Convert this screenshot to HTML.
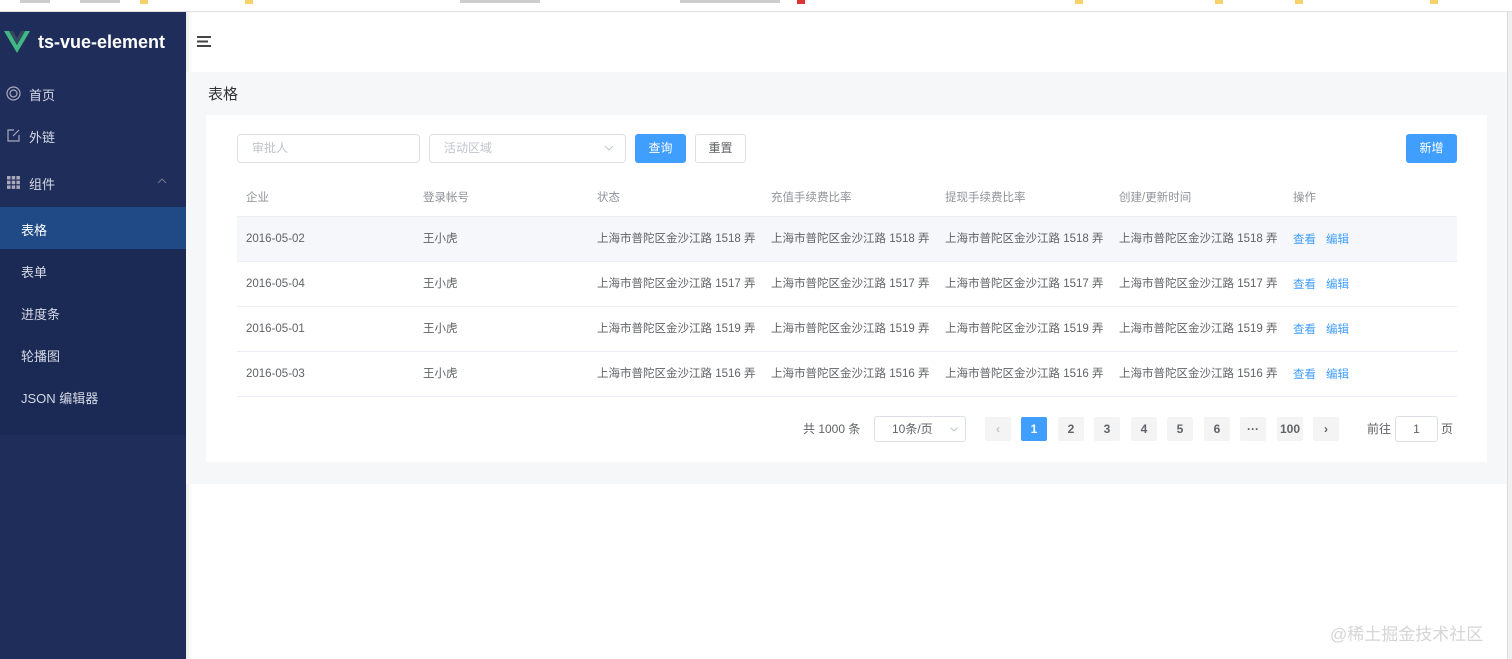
<!DOCTYPE html>
<html><head><meta charset="utf-8"><style>
*{margin:0;padding:0;box-sizing:border-box}
body{width:1512px;height:659px;overflow:hidden;background:#fff;font-family:"Liberation Sans","Noto Sans CJK SC",sans-serif;position:relative;color:#606266}
.top{position:absolute;left:0;top:0;width:1512px;height:12px;background:#fff;border-bottom:1px solid #e0e0e0}
.top i{position:absolute;top:0;width:8px;height:4px;background:#f5d36a}
.top b{position:absolute;top:0;height:3px;background:#999;opacity:.5}
.side{position:absolute;left:0;top:12px;width:186px;height:647px;background:#1f2d5a}
.sub{position:absolute;left:0;top:207px;width:186px;height:228px;background:#1b2a55}
.logo{position:absolute;left:38px;top:32px;color:#fff;font-weight:bold;font-size:18px}
.mi{position:absolute;left:29px;color:#d5d9e4;font-size:13px}
.si{position:absolute;left:21px;color:#d5d9e4;font-size:13px}
.act{position:absolute;left:0;top:207px;width:186px;height:42px;background:#1f4a85}
.shadow{position:absolute;left:186px;top:12px;width:6px;height:647px;background:linear-gradient(90deg,rgba(0,0,0,.08),transparent)}
.gray{position:absolute;left:186px;top:72px;width:1321px;height:412px;background:#f5f7f9}
.card{position:absolute;left:206px;top:115px;width:1281px;height:347px;background:#fff}
.inp{position:absolute;top:134px;height:29px;border:1px solid #dcdfe6;border-radius:4px;font-size:12px;color:#c0c4cc;padding:0 14px;line-height:27px}
.btn{position:absolute;top:134px;height:29px;border-radius:3px;font-size:12px;text-align:center;line-height:29px}
.th{position:absolute;top:189px;font-size:11.5px;color:#909399}
.row{position:absolute;left:237px;width:1220px;height:45px;border-bottom:1px solid #ebeef5;font-size:11.5px;color:#606266;line-height:44px}
.row span{position:absolute;top:0;white-space:nowrap}
.row a{color:#409eff;position:absolute;top:1px}
.pg{position:absolute;top:417px;height:24px;width:26px;background:#f4f4f5;border-radius:2px;font-size:12px;text-align:center;line-height:24px;color:#606266;font-weight:bold}
</style></head><body>
<div class="top">
<i style="left:140px"></i><i style="left:245px"></i><i style="left:1075px"></i><i style="left:1215px"></i><i style="left:1295px"></i><i style="left:1430px"></i><b style="left:20px;width:30px"></b><b style="left:80px;width:40px"></b><b style="left:460px;width:80px"></b><b style="left:680px;width:100px"></b><i style="left:797px;background:#d33"></i>
</div>
<div class="side"></div>
<div class="sub"></div>
<div class="act"></div>
<svg style="position:absolute;left:4px;top:31px" width="26" height="22" viewBox="0 0 26 22"><path d="M0 0h5l8 14 8-14h5L13 22z" fill="#41b883"/><path d="M5 0h4l4 7 4-7h4l-8 14z" fill="#34495e"/></svg>
<div class="logo">ts-vue-element</div>
<svg style="position:absolute;left:6px;top:86px" width="15" height="15"><circle cx="7.5" cy="7.5" r="6.5" fill="none" stroke="#aab" stroke-width="1.2"/><circle cx="7.5" cy="7.5" r="3.5" fill="none" stroke="#aab" stroke-width="1.2"/></svg>
<div class="mi" style="top:85px">首页</div>
<svg style="position:absolute;left:7px;top:128px" width="14" height="14"><path d="M12 7v6H1V2h6M6 8l6-6" fill="none" stroke="#aab" stroke-width="1.2"/></svg>
<div class="mi" style="top:127px">外链</div>
<svg style="position:absolute;left:7px;top:176px" width="13" height="13" fill="#aab"><rect x="0" y="0" width="3.5" height="3.5"/><rect x="4.7" y="0" width="3.5" height="3.5"/><rect x="9.4" y="0" width="3.5" height="3.5"/><rect x="0" y="4.7" width="3.5" height="3.5"/><rect x="4.7" y="4.7" width="3.5" height="3.5"/><rect x="9.4" y="4.7" width="3.5" height="3.5"/><rect x="0" y="9.4" width="3.5" height="3.5"/><rect x="4.7" y="9.4" width="3.5" height="3.5"/><rect x="9.4" y="9.4" width="3.5" height="3.5"/></svg>
<div class="mi" style="top:174px">组件</div>
<svg style="position:absolute;left:157px;top:178px" width="10" height="6"><path d="M1 5l4-4 4 4" fill="none" stroke="#778" stroke-width="1"/></svg>
<div class="si" style="top:220px;color:#fff">表格</div>
<div class="si" style="top:262px">表单</div>
<div class="si" style="top:304px">进度条</div>
<div class="si" style="top:346px">轮播图</div>
<div class="si" style="top:388px">JSON 编辑器</div>
<div class="shadow"></div>
<svg style="position:absolute;left:197px;top:36px" width="14" height="11" fill="#444"><rect y="0" width="14" height="2"/><rect y="4.5" width="11" height="2"/><rect y="9" width="14" height="2"/></svg>
<div class="gray"></div>
<div style="position:absolute;left:1507px;top:12px;width:5px;height:647px;background:#f0f0f0;border-left:1px solid #ddd"></div>
<div style="position:absolute;left:208px;top:83px;font-size:15px;color:#333">表格</div>
<div class="card"></div>
<div class="inp" style="left:237px;width:183px">审批人</div>
<div class="inp" style="left:429px;width:197px">活动区域</div>
<svg style="position:absolute;left:604px;top:145px" width="10" height="6"><path d="M1 1l4 4 4-4" fill="none" stroke="#c0c4cc"/></svg>
<div class="btn" style="left:635px;width:51px;background:#409eff;color:#fff">查询</div>
<div class="btn" style="left:695px;width:51px;border:1px solid #dcdfe6;color:#606266;line-height:27px">重置</div>
<div class="btn" style="left:1406px;width:51px;background:#409eff;color:#fff">新增</div>
<div class="th" style="left:246px">企业</div>
<div class="th" style="left:423px">登录帐号</div>
<div class="th" style="left:597px">状态</div>
<div class="th" style="left:771px">充值手续费比率</div>
<div class="th" style="left:945px">提现手续费比率</div>
<div class="th" style="left:1119px">创建/更新时间</div>
<div class="th" style="left:1293px">操作</div>
<div style="position:absolute;left:237px;top:216px;width:1220px;height:1px;background:#ebeef5"></div>
<div class="row" style="top:217px;background:#f5f7fa"><span style="left:9px">2016-05-02</span><span style="left:186px">王小虎</span><span style="left:360px">上海市普陀区金沙江路 1518 弄</span><span style="left:534px">上海市普陀区金沙江路 1518 弄</span><span style="left:708px">上海市普陀区金沙江路 1518 弄</span><span style="left:882px">上海市普陀区金沙江路 1518 弄</span><a style="left:1056px">查看</a><a style="left:1089px">编辑</a></div>
<div class="row" style="top:262px"><span style="left:9px">2016-05-04</span><span style="left:186px">王小虎</span><span style="left:360px">上海市普陀区金沙江路 1517 弄</span><span style="left:534px">上海市普陀区金沙江路 1517 弄</span><span style="left:708px">上海市普陀区金沙江路 1517 弄</span><span style="left:882px">上海市普陀区金沙江路 1517 弄</span><a style="left:1056px">查看</a><a style="left:1089px">编辑</a></div>
<div class="row" style="top:307px"><span style="left:9px">2016-05-01</span><span style="left:186px">王小虎</span><span style="left:360px">上海市普陀区金沙江路 1519 弄</span><span style="left:534px">上海市普陀区金沙江路 1519 弄</span><span style="left:708px">上海市普陀区金沙江路 1519 弄</span><span style="left:882px">上海市普陀区金沙江路 1519 弄</span><a style="left:1056px">查看</a><a style="left:1089px">编辑</a></div>
<div class="row" style="top:352px"><span style="left:9px">2016-05-03</span><span style="left:186px">王小虎</span><span style="left:360px">上海市普陀区金沙江路 1516 弄</span><span style="left:534px">上海市普陀区金沙江路 1516 弄</span><span style="left:708px">上海市普陀区金沙江路 1516 弄</span><span style="left:882px">上海市普陀区金沙江路 1516 弄</span><a style="left:1056px">查看</a><a style="left:1089px">编辑</a></div>
<div style="position:absolute;left:803px;top:420px;font-size:12px">共 1000 条</div>
<div style="position:absolute;left:874px;top:416px;width:92px;height:26px;border:1px solid #dcdfe6;border-radius:3px;font-size:12px;padding:0 17px;line-height:24px">10条/页</div>
<svg style="position:absolute;left:950px;top:427px" width="8" height="5"><path d="M0.5 0.5l3.5 3.5 3.5-3.5" fill="none" stroke="#c0c4cc"/></svg>
<div class="pg" style="left:985px;color:#c0c4cc">‹</div>
<div class="pg" style="left:1021px;background:#409eff;color:#fff">1</div>
<div class="pg" style="left:1058px">2</div>
<div class="pg" style="left:1094px">3</div>
<div class="pg" style="left:1131px">4</div>
<div class="pg" style="left:1167px">5</div>
<div class="pg" style="left:1204px">6</div>
<div class="pg" style="left:1240px">···</div>
<div class="pg" style="left:1277px">100</div>
<div class="pg" style="left:1313px">›</div>
<div style="position:absolute;left:1367px;top:420px;font-size:12px">前往</div>
<div style="position:absolute;left:1395px;top:416px;width:43px;height:26px;border:1px solid #dcdfe6;border-radius:3px;font-size:12px;text-align:center;line-height:24px">1</div>
<div style="position:absolute;left:1441px;top:420px;font-size:12px">页</div>
<div style="position:absolute;left:1330px;top:620px;font-size:17px;color:#d5d5d5">@稀土掘金技术社区</div>
</body></html>
